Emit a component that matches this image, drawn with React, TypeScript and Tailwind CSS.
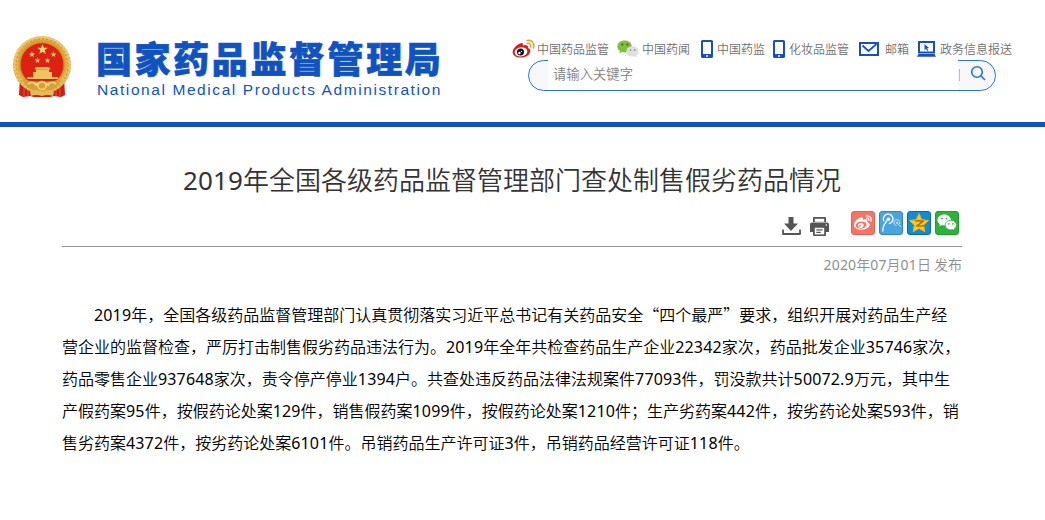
import React from "react";
import { FaWeibo } from "react-icons/fa";

const star = (cx: number, cy: number, r: number, inner = 0.4) =>
  Array.from({ length: 10 }, (_, i) => {
    const a = (Math.PI / 5) * i - Math.PI / 2;
    const q = i % 2 ? r * inner : r;
    return `${(cx + q * Math.cos(a)).toFixed(2)},${(cy + q * Math.sin(a)).toFixed(2)}`;
  }).join(" ");

function Mixed({ text }: { text: string }) {
  return (
    <>
      {text.split(/([0-9.]+)/).map((part, i) =>
        i % 2 ? (
          <span key={i} className="font-['Noto_Sans',sans-serif] font-normal tracking-[0.15px]">
            {part}
          </span>
        ) : (
          <React.Fragment key={i}>{part}</React.Fragment>
        ),
      )}
    </>
  );
}

function Emblem() {
  return (
    <svg width="60" height="64" viewBox="0 0 60 64" className="block shrink-0">
      <defs>
        <radialGradient id="gold" cx="50%" cy="48%" r="52%">
          <stop offset="0.75" stopColor="#d89a2c" />
          <stop offset="0.88" stopColor="#ecc76a" />
          <stop offset="1" stopColor="#cf9a3c" />
        </radialGradient>
      </defs>
      <path d="M8 42 L7 60 L11 62 L18 61 L22 62 L38 62 L42 61 L49 62 L53 60 L52 42 Z" fill="#cf1c14" />
      <path d="M12 51v10M16 53v8M44 53v8M48 51v10" stroke="#e8503a" strokeWidth="1" />
      <circle cx="30" cy="30" r="29" fill="url(#gold)" />
      <circle cx="30" cy="30" r="26" fill="none" stroke="#c48a2c" strokeWidth="1" strokeDasharray="2 2.2" />
      <circle cx="30" cy="30" r="28" fill="none" stroke="#f0d68a" strokeWidth="1" strokeDasharray="2 1.6" />
      <circle cx="30" cy="29.5" r="21.5" fill="#dc2212" />
      <g fill="#f5d478">
        <polygon points={star(30.5, 14.5, 5.6)} />
        <polygon points={star(20, 19.5, 3.2)} />
        <polygon points={star(41.5, 19.5, 3.2)} />
        <polygon points={star(25.5, 25.5, 3)} />
        <polygon points={star(35.5, 25.5, 3)} />
      </g>
      <g fill="#efc35f">
        <path d="M22.500 34.500 L24 32 H37 L38.500 34.500 Z" />
        <path d="M24 34.500h13v3H24z" />
        <path d="M21 37h19v5H21z" />
        <path d="M15 42h31v2H15z" />
      </g>
      <path d="M10 44.500 Q30 49 50 44.500 L44 53 Q30 60 16 53 Z" fill="#d9a036" />
      <path d="M16 49 Q21 45 24 50 Q30 44 36 50 Q39 45 44 49" fill="none" stroke="#f8e09a" strokeWidth="1.6" />
      <circle cx="30" cy="50.500" r="4" fill="none" stroke="#f5d478" strokeWidth="1.600" />
      <path d="M18 57 Q24 53 30 57 Q36 53 42 57 L41 61 Q36 59 30 61 Q24 59 19 61 Z" fill="#e6bb55" />
    </svg>
  );
}

function WeiboColor() {
  return (
    <svg width="23" height="20" viewBox="0 0 23 20" className="block">
      <path d="M9 4.2 C10.7 3.6 11.4 4.8 10.9 6.6 C13.5 5.6 16.4 5.4 16 8.9 C18.2 9.7 18.8 11 18.2 12.9 C17 16.7 12.7 18.6 8.3 18.5 C4 18.4 .5 16.4 .6 12.9 C.7 9.6 5 5.2 9 4.2Z" fill="#d81e24" />
      <ellipse cx="9" cy="12.8" rx="6.4" ry="4.6" transform="rotate(-8 9 12.8)" fill="#fff" />
      <circle cx="8.5" cy="13" r="3.5" fill="#111" />
      <circle cx="7.4" cy="14" r="1.2" fill="#fff" />
      <circle cx="9.4" cy="12.4" r=".6" fill="#fff" />
      <path d="M15.2 4.5 C17.6 3.8 19.3 5.6 18.6 8" fill="none" stroke="#e8a33a" strokeWidth="1.5" strokeLinecap="round" />
      <path d="M15 1.5 C19.6.5 22.8 4 21.4 8.8" fill="none" stroke="#e8a33a" strokeWidth="1.7" strokeLinecap="round" />
    </svg>
  );
}

function WechatColor() {
  return (
    <svg width="22" height="18" viewBox="0 0 22 18" className="block">
      <path d="M7.6.5C3.5.5.3 3.1.3 6.5c0 1.9 1 3.5 2.6 4.6L2.2 13.4l2.7-1.3c.9.3 1.8.4 2.7.4 4.1 0 7.2-2.7 7.2-6S11.700.5 7.600.5Z" fill="#83bd3c" />
      <circle cx="5.2" cy="4.4" r="1" fill="#3d5b1c" />
      <circle cx="10.4" cy="4.4" r="1" fill="#3d5b1c" />
      <path d="M15.500 6.200c-3.500 0-6.200 2.300-6.200 5.200s2.800 5.200 6.200 5.200c.8 0 1.500-.1 2.200-.3l2.200 1.200-.6-1.900c1.500-1 2.500-2.400 2.500-4.100 0-2.900-2.800-5.300-6.300-5.300Z" fill="#dedfe1" />
      <circle cx="13.4" cy="10.1" r=".8" fill="#777" />
      <circle cx="17.8" cy="10.1" r=".8" fill="#777" />
    </svg>
  );
}

function Phone() {
  return (
    <svg width="12" height="18" viewBox="0 0 12 18" className="block">
      <path fillRule="evenodd" d="M1.500 0h9A1.500 1.500 0 0 1 12 1.500v15a1.500 1.500 0 0 1-1.500 1.500h-9A1.500 1.500 0 0 1 0 16.500v-15A1.500 1.500 0 0 1 1.500 0ZM2 2v12h8V2ZM5 15.200v1.500h2v-1.500Z" fill="#1650b8" />
    </svg>
  );
}

function Mail() {
  return (
    <svg width="20" height="14" viewBox="0 0 20 14" className="block">
      <rect x="1" y="1" width="18" height="12" fill="none" stroke="#1650b8" strokeWidth="2" />
      <path d="M3.500 3.500 L9.500 9 L17.500 2" fill="none" stroke="#1650b8" strokeWidth="1.700" />
    </svg>
  );
}

function Laptop() {
  return (
    <svg width="19" height="16" viewBox="0 0 19 16" className="block">
      <rect x="2" y="1" width="15" height="10.500" fill="none" stroke="#1650b8" strokeWidth="2" />
      <path d="M1.500 13h16l1.500 2.700H0Z" fill="#1650b8" />
      <path d="M7.500 3v6l1.500-1.300 1.200 2.300 1-.6-1.100-2.100 1.900-.3Z" fill="#1650b8" />
    </svg>
  );
}

function Download() {
  return (
    <svg width="19" height="18" viewBox="0 0 19 18" className="block">
      <path d="M6.500 0h5v6.500h4.500L9 14 2 6.500h4.500Z" fill="#555" />
      <path d="M1 12.500v4.500h17v-4.500" fill="none" stroke="#555" strokeWidth="1.800" strokeLinejoin="round" />
    </svg>
  );
}

function Printer() {
  return (
    <svg width="19" height="19" viewBox="0 0 19 19" className="block">
      <path d="M4 0h11a1 1 0 0 1 1 1v4H3V1a1 1 0 0 1 1-1Z" fill="#555" />
      <path d="M4.800 1.800h9.400v3H4.800Z" fill="#fff" />
      <path d="M2 5.500h15a2 2 0 0 1 2 2V15h-3v3a1 1 0 0 1-1 1H4a1 1 0 0 1-1-1v-3H0V7.500a2 2 0 0 1 2-2Z" fill="#555" />
      <circle cx="16.300" cy="8" r=".8" fill="#fff" />
      <path d="M4.800 10.800h9.400v6.600H4.800Z" fill="#fff" />
      <path d="M6.300 12.900h6.400M6.300 15.300h4.500" stroke="#555" strokeWidth="1.200" />
    </svg>
  );
}

function TencentWeibo() {
  return (
    <svg width="22" height="22" viewBox="0 0 22 22" fill="none" stroke="#fff" className="block shrink-0">
      <path d="M2.800 19.500 C2.800 14.500 4.200 11.500 7.200 8.500" strokeWidth="1.300" />
      <circle cx="8.400" cy="7.200" r="1.700" fill="#fff" stroke="none" />
      <path d="M3.900 9.200 A4.800 4.800 0 1 1 8.800 11.700" strokeWidth="1.300" />
      <circle cx="17" cy="10.700" r="1" fill="#d8eefb" stroke="none" />
      <path d="M16.600 13.500 A2.900 2.900 0 1 1 19.400 12 M17.500 11.300 L20.800 15" stroke="#d8eefb" strokeWidth=".9" />
    </svg>
  );
}

function QzoneStar() {
  return (
    <svg width="22" height="22" viewBox="0 0 22 22" className="block shrink-0">
      <polygon points={star(11, 11.6, 10, 0.48)} fill="#fcc91f" stroke="#f3ad17" strokeWidth="1" strokeLinejoin="round" />
      <path d="M7 9.200 C10 8.500 12.500 8.600 15 9.200 L9 13.800 C11.500 14.400 13.500 14.300 16 13.700" fill="none" stroke="#a8640f" strokeWidth="1.300" />
    </svg>
  );
}

function WechatWhite() {
  return (
    <svg width="20" height="18" viewBox="0 0 20 18" className="block shrink-0">
      <path d="M7.200.5C3.500.5.500 2.900.5 6c0 1.700.9 3.200 2.400 4.200l-.6 2 2.300-1.200c.8.2 1.700.4 2.600.4 3.700 0 6.700-2.400 6.700-5.400S10.900.5 7.200.5Z" fill="#fff" />
      <circle cx="5" cy="4.600" r=".9" fill="#2fab3c" />
      <circle cx="9.400" cy="4.600" r=".9" fill="#2fab3c" />
      <path d="M13.800 6.300c-3.200 0-5.700 2.100-5.700 4.800s2.500 4.800 5.700 4.800c.7 0 1.400-.1 2-.3l2 1.100-.5-1.800c1.300-.9 2.200-2.200 2.200-3.800 0-2.700-2.500-4.800-5.700-4.800Z" fill="#fff" stroke="#2fab3c" strokeWidth=".8" />
      <circle cx="11.900" cy="9.900" r=".8" fill="#2fab3c" />
      <circle cx="15.800" cy="9.900" r=".8" fill="#2fab3c" />
    </svg>
  );
}

const links = [
  { icon: <WeiboColor />, label: "中国药品监管", box: "ml-0 w-[25px]" },
  { icon: <WechatColor />, label: "中国药闻", box: "ml-2 w-[25px]" },
  { icon: <Phone />, label: "中国药监", box: "ml-[11px] w-4" },
  { icon: <Phone />, label: "化妆品监管", box: "ml-2 w-4" },
  { icon: <Mail />, label: "邮箱", box: "ml-[10px] w-[26px]" },
  { icon: <Laptop />, label: "政务信息报送", box: "ml-2 w-[23px]" },
];

const lines = [
  "2019年，全国各级药品监督管理部门认真贯彻落实习近平总书记有关药品安全“四个最严”要求，组织开展对药品生产经",
  "营企业的监督检查，严厉打击制售假劣药品违法行为。2019年全年共检查药品生产企业22342家次，药品批发企业35746家次，",
  "药品零售企业937648家次，责令停产停业1394户。共查处违反药品法律法规案件77093件，罚没款共计50072.9万元，其中生",
  "产假药案95件，按假药论处案129件，销售假药案1099件，按假药论处案1210件；生产劣药案442件，按劣药论处案593件，销",
  "售劣药案4372件，按劣药论处案6101件。吊销药品生产许可证3件，吊销药品经营许可证118件。",
];

export default function App() {
  return (
    <div lang="zh-CN" className="h-[520px] w-[1045px] overflow-hidden bg-white font-['Noto_Sans_CJK_SC',sans-serif] font-[350]">
      <header className="flex h-[127px] border-b-[5px] border-[#1153be] pl-3">
        <div className="mt-[35px]">
          <Emblem />
        </div>
        <div className="ml-[24px] mt-[38px] w-[410px] whitespace-nowrap text-[#1153be]">
          <div className="text-[36px] font-black leading-[38px] tracking-[2.6px] [-webkit-text-stroke:0.7px_#1153be]">国家药品监督管理局</div>
          <div className="ml-px mt-[5px] font-['Liberation_Sans',sans-serif] text-[15.5px] font-normal leading-[18px] tracking-[1.58px]">
            National Medical Products Administration
          </div>
        </div>
        <div className="ml-[6px] mt-[38px] whitespace-nowrap">
          <nav className="flex h-[22px] items-center text-xs leading-5 text-[#707070]">
            {links.map((l) => (
              <a key={l.label} className="flex items-center">
                <span className={l.box}>{l.icon}</span>
                <span className="-mt-px">{l.label}</span>
              </a>
            ))}
          </nav>
          <div className="ml-4 flex h-[31px] w-[468px] rounded-full border border-[#2b74d2] bg-[#f8f8fa]">
            <div className="-mt-px ml-[19px] h-[30px] w-[410px] bg-white pl-[5px] text-[13.333px] leading-[28px] text-[#808080]">
              请输入关键字
            </div>
            <div className="ml-px mt-2 h-3 w-px bg-[#bbb]" />
            <svg width="16" height="16" viewBox="0 0 16 16" className="ml-[10px] mt-1" fill="none" stroke="#2472d8" strokeWidth="1.600">
              <circle cx="7" cy="7" r="5.300" />
              <path d="M10.800 10.800 15 15" />
            </svg>
          </div>
        </div>
      </header>
      <main className="ml-[62px] w-[900px]">
        <h1 className="whitespace-nowrap pt-[32px] text-center text-[26px] font-[350] leading-10 text-[#333]">
          <Mixed text="2019年全国各级药品监督管理部门查处制售假劣药品情况" />
        </h1>
        <div className="-mt-px flex h-12 justify-end border-b border-[#999] pr-[3px] pt-3">
          <div className="mt-[6px]">
            <Download />
          </div>
          <div className="ml-[9px] mt-[6px]">
            <Printer />
          </div>
          <div className="ml-[22px] flex gap-1">
            <div className="flex size-6 items-center justify-center rounded-[3px] border border-[#dd665a] bg-[#f47565] text-white">
              <FaWeibo size={18} />
            </div>
            <div className="flex size-6 items-center justify-center rounded-[3px] border border-[#3487bd] bg-[#4aa5de]">
              <TencentWeibo />
            </div>
            <div className="flex size-6 items-center justify-center rounded-[3px] border border-[#086ba8] bg-[#128bd0]">
              <QzoneStar />
            </div>
            <div className="flex size-6 items-center justify-center rounded-[3px] border border-[#239a30] bg-[#2fb13c]">
              <WechatWhite />
            </div>
          </div>
        </div>
        <div className="mt-[7px] text-right text-sm leading-5 text-[#8f8f8f]">
          <Mixed text="2020年07月01日 发布" />
        </div>
        <article className="mt-[23px] text-base leading-8 text-black">
          {lines.map((t, i) => (
            <div key={t} className={i === 0 ? "h-8 whitespace-nowrap pl-8" : "h-8 whitespace-nowrap"}>
              <Mixed text={t} />
            </div>
          ))}
        </article>
      </main>
    </div>
  );
}
